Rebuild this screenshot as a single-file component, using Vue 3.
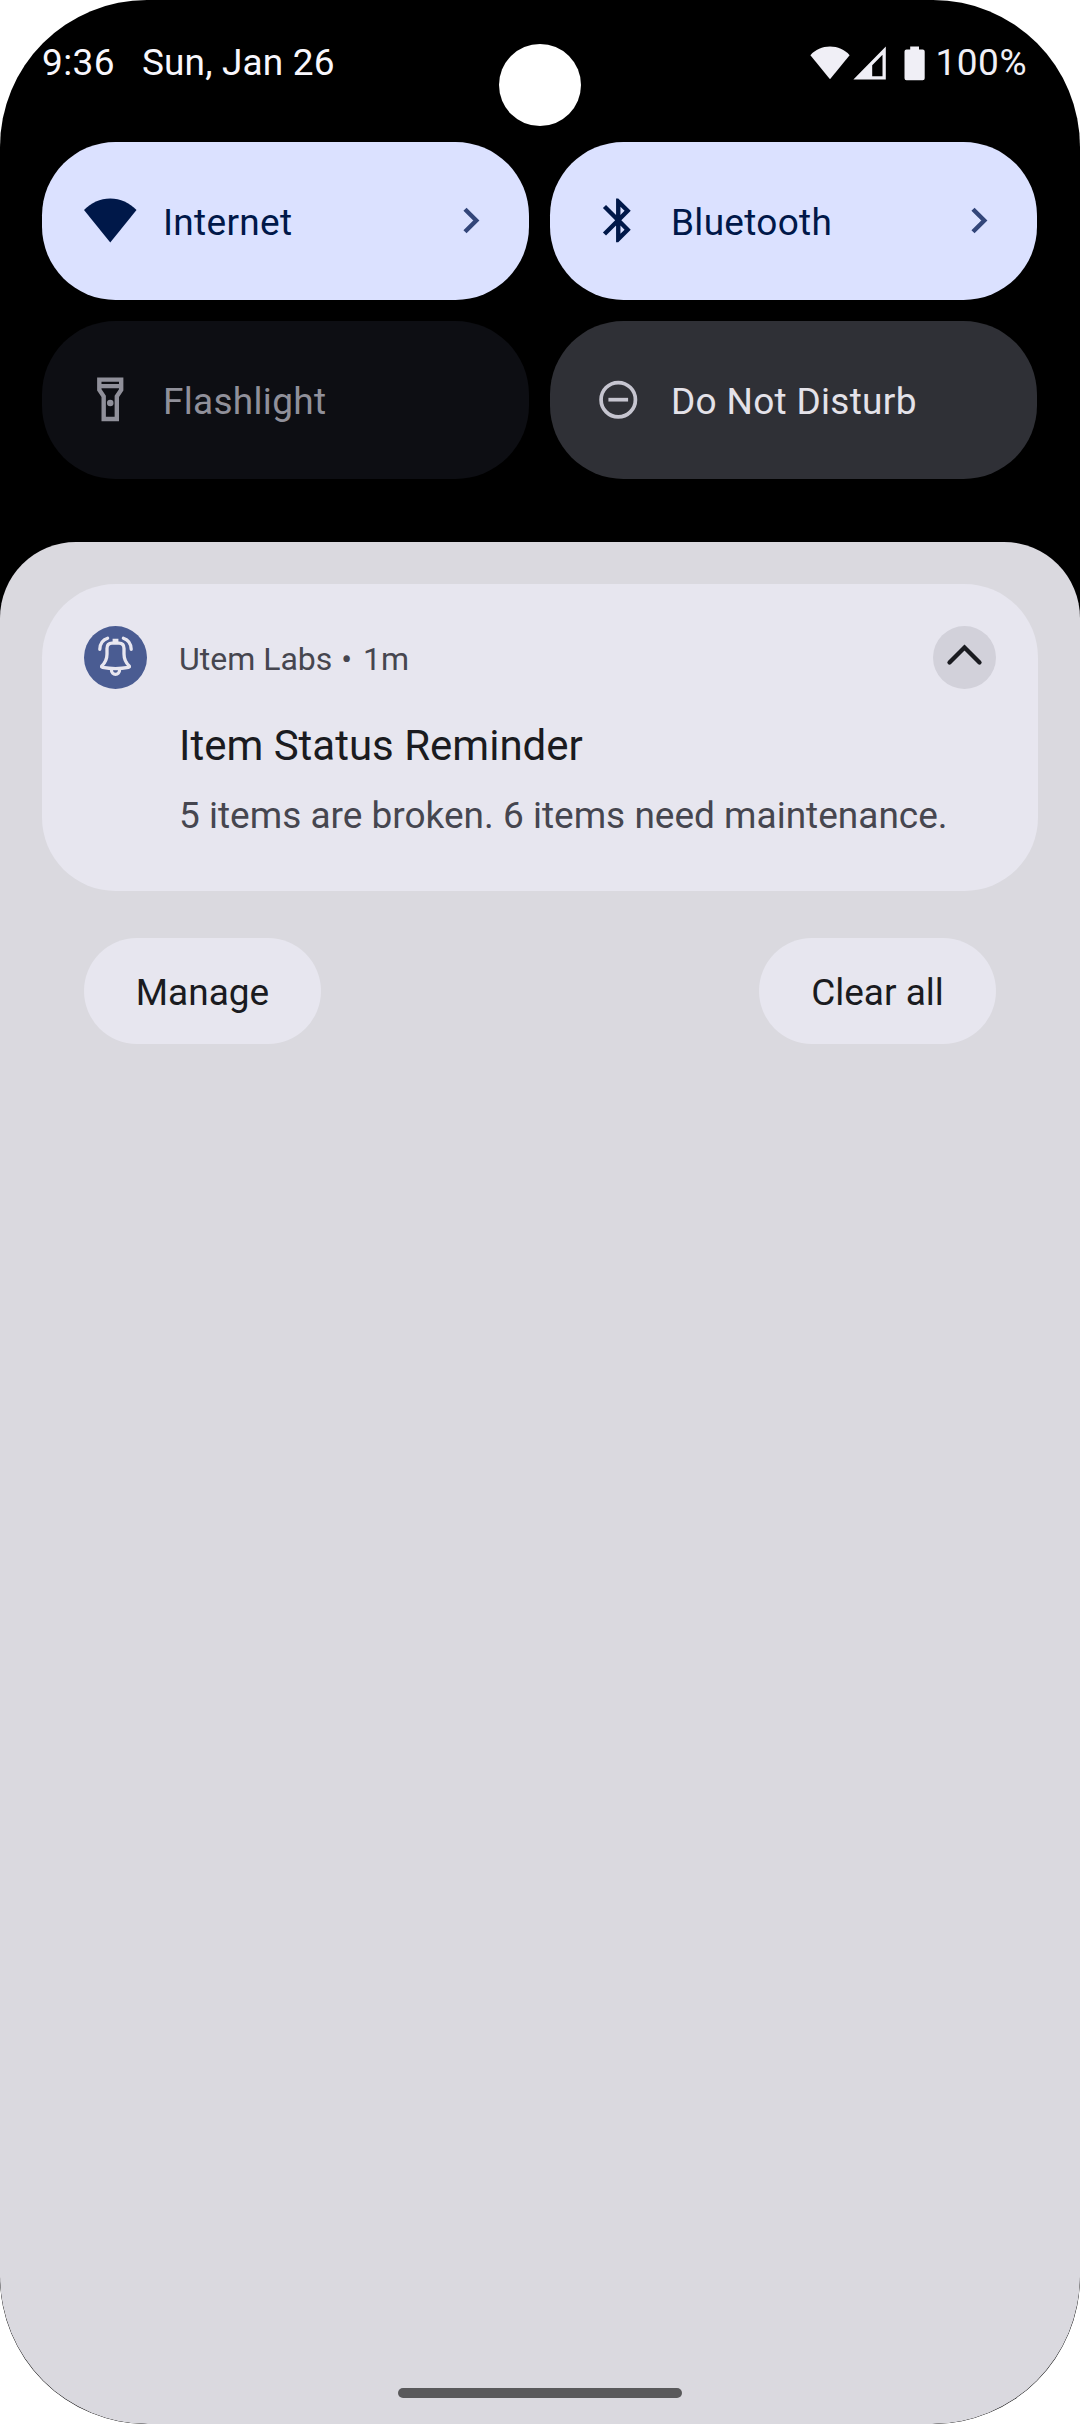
<script setup>
const tiles = [
  { id: 'wifi', label: 'Internet', state: 'active', chevron: true },
  { id: 'bluetooth', label: 'Bluetooth', state: 'active', chevron: true },
  { id: 'flashlight', label: 'Flashlight', state: 'unavailable', chevron: false },
  { id: 'dnd', label: 'Do Not Disturb', state: 'inactive', chevron: false },
]
</script>

<template>
  <div class="screen">
    <header class="status">
      <div class="clock">
        <span class="time">9:36</span>
        <span class="date">Sun, Jan 26</span>
      </div>
      <div class="system">
        <svg class="sys-wifi" width="40" height="34" viewBox="0 0 40 34">
          <path d="M20 33.200L.4 9.200C5.400 3.600 12.300.6 20 .6s14.600 3 19.600 8.600z" fill="currentColor" />
        </svg>
        <svg class="sys-signal" width="33" height="34" viewBox="0 0 33 34">
          <path fill-rule="evenodd" d="M.4 33.400L32.800.6v32.800zM19.200 30.200h10.300V8.700L19.200 19.200z" fill="currentColor" />
        </svg>
        <svg class="sys-battery" width="21" height="35" viewBox="0 0 21 35">
          <path d="M6.200.5h8.800v3h3.700a2 2 0 0 1 2 2v26.800a2 2 0 0 1-2 2H2.500a2 2 0 0 1-2-2V5.500a2 2 0 0 1 2-2h3.700z" fill="currentColor" />
        </svg>
        <span class="percent">100%</span>
      </div>
    </header>
    <div class="camera"></div>

    <section class="tiles">
      <div v-for="t in tiles" :key="t.id" class="tile" :class="t.state">
        <svg class="tile-icon" viewBox="0 0 24 24">
          <path v-if="t.id === 'wifi'" d="M12 22.200L0 7.300C3.200 4 7.400 2 12 2s8.800 2 12 5.300z" fill="currentColor" />
          <path v-else-if="t.id === 'bluetooth'" d="M17.710 7.710L12 2h-1v7.590L6.410 5 5 6.410 10.590 12 5 17.590 6.410 19 11 14.410V22h1l5.710-5.710-4.300-4.290 4.300-4.290zM13 5.830l1.880 1.880L13 9.590V5.830zm1.880 10.460L13 18.170v-3.760l1.880 1.880z" fill="currentColor" />
          <g v-else-if="t.id === 'flashlight'" fill="currentColor">
            <path fill-rule="evenodd" d="M18 2H6v6l2 3v11h8V11l2-3zM16 4v1H8V4zM14 10.400V20h-4v-9.600l-2-3V7h8v.4z" />
            <circle cx="12" cy="13.700" r="1.500" />
          </g>
          <g v-else fill="none" stroke="currentColor" stroke-width="1.700">
            <circle cx="12" cy="12.200" r="7.850" />
            <path d="M7.500 12.200h9" />
          </g>
        </svg>
        <span class="tile-label">{{ t.label }}</span>
        <svg v-if="t.chevron" class="tile-chevron" width="17" height="27" viewBox="0 0 17 27">
          <path d="M2 2.200L13.300 13.500 2 24.800" fill="none" stroke="currentColor" stroke-width="4.400" />
        </svg>
      </div>
    </section>

    <main class="shade">
      <article class="card">
        <svg class="badge" width="63" height="63" viewBox="0 0 63 63">
          <circle cx="31.500" cy="31.500" r="31.500" fill="#4a5c92" />
          <g fill="none" stroke="#e8e7f0" stroke-width="3.300" stroke-linecap="round" stroke-linejoin="round">
            <path d="M23 22.500C23 19 25 17.200 28 17.200H35C38 17.200 40 19 40 22.500V28C40 33 41.500 36.500 45.400 40.300Q45.600 41.200 44.500 41.400Q31.500 43.700 18.500 41.400Q17.400 41.200 17.600 40.300C21.500 36.500 23 33 23 28Z" />
            <path d="M27.400 43.500C27.400 50 35.600 50 35.600 43.500" />
            <path d="M15.800 23.300C16 17.800 19 13.800 23.600 12.300M47.200 23.300C47 17.800 44 13.800 39.400 12.300" />
          </g>
          <path d="M28.600 12.700h5.800v4h-5.800z" fill="#e8e7f0" />
        </svg>
        <div class="content">
          <div class="meta"><span>Utem Labs</span><span class="dot">•</span><span>1m</span></div>
          <h1 class="title">Item Status Reminder</h1>
          <p class="body">5 items are broken. 6 items need maintenance.</p>
        </div>
        <svg class="collapse" width="63" height="63" viewBox="0 0 63 63">
          <circle cx="31.500" cy="31.500" r="31.500" fill="#d2d1da" />
          <path d="M16.500 36.500L31.500 21.500 46.500 36.500" fill="none" stroke="#1a1b20" stroke-width="4.300" stroke-linecap="round" />
        </svg>
      </article>
      <div class="actions">
        <button class="action">Manage</button>
        <button class="action">Clear all</button>
      </div>
      <div class="home"></div>
    </main>
  </div>
</template>

<style>
body {
  margin: 0;
  background: #fff;
}
</style>

<style scoped>
.screen {
  position: relative;
  display: flex;
  flex-direction: column;
  width: 1080px;
  height: 2424px;
  overflow: hidden;
  border-radius: 147px;
  background: #000;
  font-family: Roboto, "Liberation Sans", sans-serif;
  font-size: 37px;
  line-height: 44px;
}
.status {
  display: flex;
  justify-content: space-between;
  align-items: flex-start;
  box-sizing: border-box;
  height: 142px;
  padding: 41px 53px 0 42px;
  color: #f8f7fd;
  white-space: nowrap;
}
.clock {
  display: flex;
  gap: 27px;
}
.time {
  letter-spacing: 0.400px;
}
.date {
  letter-spacing: 0.150px;
}
.system {
  display: flex;
  align-items: flex-start;
  color: #f0eff6;
}
.system svg {
  flex: none;
  margin-top: 5px;
}
.system .sys-signal {
  margin-left: 3px;
}
.system .sys-battery {
  margin-left: 18px;
}
.percent {
  margin-left: 11px;
  letter-spacing: 0.500px;
}
.camera {
  position: absolute;
  left: 499px;
  top: 44px;
  width: 82px;
  height: 82px;
  border-radius: 50%;
  background: #fff;
}
.tiles {
  display: grid;
  grid-template-columns: 487px 487px;
  gap: 21px;
  padding: 0 42px;
}
.tile {
  display: flex;
  align-items: center;
  box-sizing: border-box;
  height: 158px;
  padding: 0 49.500px 0 42px;
  border-radius: 73.500px;
  letter-spacing: 0.300px;
}
.active {
  background: #dbe1ff;
  color: #001849;
}
.unavailable {
  background: #0d0e13;
  color: #90909a;
}
.inactive {
  background: #2f3036;
  color: #e4e2e9;
}
.inactive .tile-icon {
  color: #c6c5d0;
}
.tile-icon {
  flex: none;
  width: 52.500px;
  height: 52.500px;
  margin: -1px 26.500px 0 0;
}
.tile-label {
  flex: 1;
  padding-top: 3px;
}
.tile-chevron {
  flex: none;
  margin-top: -1px;
  color: #33467a;
}
.shade {
  display: flex;
  flex-direction: column;
  flex: 1;
  box-sizing: border-box;
  margin-top: 63px;
  padding: 42px 42px 26px;
  border-radius: 76px 76px 148px 148px;
  background: #dad9df;
}
.card {
  display: flex;
  align-items: flex-start;
  box-sizing: border-box;
  height: 307px;
  padding: 42px;
  border-radius: 73.500px;
  background: #e7e6ef;
}
.badge,
.collapse {
  flex: none;
}
.content {
  flex: 1;
  min-width: 0;
  margin-left: 32px;
  white-space: nowrap;
}
.meta {
  padding-top: 11px;
  font-size: 32px;
  color: #46464f;
}
.dot {
  margin: 0 11px 0 9px;
}
.title {
  margin: 43px 0 0;
  font-size: 42px;
  font-weight: 400;
  color: #1a1b20;
}
.body {
  margin: 26px 0 0;
  color: #46464f;
}
.actions {
  display: flex;
  justify-content: space-between;
  margin-top: 47px;
  padding: 0 42px;
}
.action {
  box-sizing: border-box;
  width: 237px;
  height: 106px;
  padding: 4px 0 0;
  border: 0;
  border-radius: 53px;
  background: #e7e6ef;
  color: #1a1b20;
  font: inherit;
}
.home {
  width: 284px;
  height: 10px;
  margin: auto auto 0;
  border-radius: 5px;
  background: #59595b;
}
</style>
